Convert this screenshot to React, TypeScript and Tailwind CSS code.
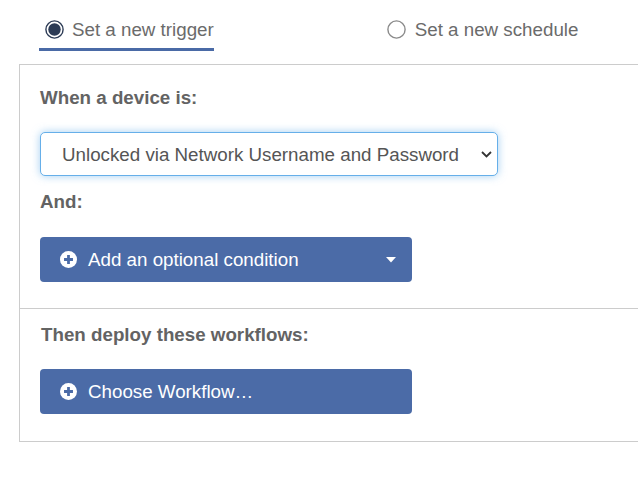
import { useState } from 'react';

function Radio({ checked }: { checked: boolean }) {
  return (
    <svg width="19" height="19" viewBox="0 0 19 19" className="shrink-0">
      <circle cx="9.5" cy="9.5" r="8.6" fill="white" stroke={checked ? '#2c3b55' : '#8a8a8a'} strokeWidth="1.4" />
      {checked && <circle cx="9.5" cy="9.5" r="6.2" fill="#2c3b55" />}
    </svg>
  );
}

function PlusCircle() {
  return (
    <svg width="17" height="17" viewBox="0 0 16 16" className="shrink-0">
      <circle cx="8" cy="8" r="8" fill="white" />
      <path d="M8 3.8v8.4M3.8 8h8.4" stroke="#4b6ba7" strokeWidth="2.6" />
    </svg>
  );
}

export default function App() {
  const [mode, setMode] = useState<'trigger' | 'schedule'>('trigger');

  return (
    <div className="w-full h-[478px] bg-white overflow-hidden font-['Liberation_Sans',Arial,sans-serif] text-[18.75px] leading-[27px]">
      {/* Tabs */}
      <div className="flex h-[64px] items-start">
        <button
          onClick={() => setMode('trigger')}
          className={`ml-[39px] mt-[15px] flex items-center gap-[8px] pl-[6px] h-[36px] pb-[5px] whitespace-nowrap border-b-[3px] ${mode === 'trigger' ? 'border-[#4a6aa6]' : 'border-transparent'}`}
        >
          <Radio checked={mode === 'trigger'} />
          <span className="text-[#6b6b6b]">Set a new trigger</span>
        </button>
        <button
          onClick={() => setMode('schedule')}
          className={`ml-[167px] mt-[15px] flex items-center gap-[9px] pl-[6px] h-[36px] pb-[5px] whitespace-nowrap border-b-[3px] ${mode === 'schedule' ? 'border-[#4a6aa6]' : 'border-transparent'}`}
        >
          <Radio checked={mode === 'schedule'} />
          <span className="text-[#6b6b6b]">Set a new schedule</span>
        </button>
      </div>

      {/* Panel */}
      <div className="ml-[19px] border-l border-t border-b border-[#cccccc]">
        <div className="pl-[20px] pt-[19px] pb-[26px]">
          <div className="font-bold text-[#636363]">When a device is:</div>
          <div className="relative mt-[21px] w-[458px]">
            <select className="appearance-none w-full h-[44px] rounded-[5px] border border-[#66afe9] shadow-[0_0_8px_rgba(102,175,233,0.6)] bg-white pl-[21px] pr-[30px] text-[#555555] outline-none">
              <option>Unlocked via Network Username and Password</option>
            </select>
            <svg width="11" height="7" viewBox="0 0 11 7" className="absolute right-[6px] top-[19px] pointer-events-none">
              <path d="M1 1l4.5 4.5L10 1" fill="none" stroke="#333" strokeWidth="1.8" />
            </svg>
          </div>
          <div className="mt-[12px] font-bold text-[#636363]">And:</div>
          <button className="mt-[22px] w-[372px] h-[45px] rounded-[4px] bg-[#4b6ba7] text-white flex items-center pl-[20px] pr-[16px]">
            <PlusCircle />
            <span className="ml-[11px]">Add an optional condition</span>
            <svg width="10" height="6" viewBox="0 0 10 6" className="ml-auto">
              <path d="M0 0h10L5 5.5z" fill="white" />
            </svg>
          </button>
        </div>
        <div className="border-t border-[#cccccc] pl-[21px] pt-[12px] pb-[27px]">
          <div className="font-bold text-[#636363]">Then deploy these workflows:</div>
          <button className="mt-[21px] -ml-[1px] w-[372px] h-[45px] rounded-[4px] bg-[#4b6ba7] text-white flex items-center pl-[20px]">
            <PlusCircle />
            <span className="ml-[11px]">Choose Workflow…</span>
          </button>
        </div>
      </div>
    </div>
  );
}
